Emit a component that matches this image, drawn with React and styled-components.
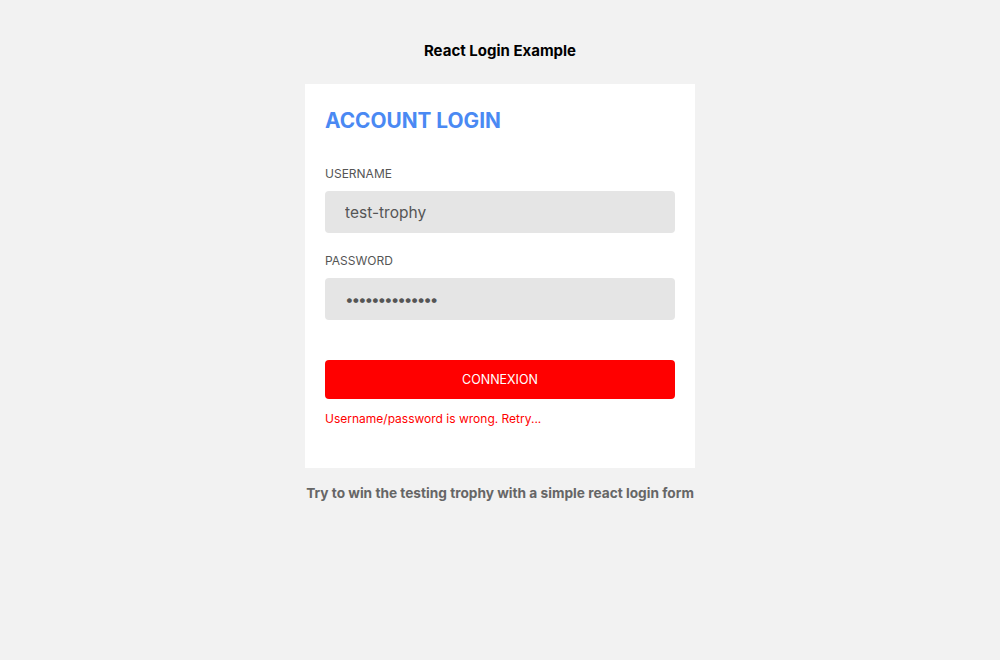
import React from 'react';
import styled, { createGlobalStyle } from 'styled-components';

const GlobalStyle = createGlobalStyle`
  html, body {
    margin: 0;
    padding: 0;
    background: #f2f2f2;
    font-family: Inter, "Liberation Sans", sans-serif;
  }
  * { box-sizing: border-box; }
`;

const Page = styled.main`
  min-height: 660px;
  display: flex;
  flex-direction: column;
  align-items: center;
  padding-top: 41px;
`;

const Title = styled.h1`
  margin: 0;
  font-size: 15px;
  font-weight: 700;
  line-height: 20px;
  color: #000;
`;

const Card = styled.form`
  margin-top: 23px;
  width: 390px;
  background: #fff;
  padding: 24px 20px 41px;
  display: flex;
  flex-direction: column;
`;

const Heading = styled.h2`
  margin: 0 0 32px;
  font-size: 20.8px;
  line-height: 26px;
  font-weight: 700;
  color: #4a89f3;
`;

const Label = styled.label`
  font-size: 12px;
  line-height: 16px;
  color: #555;
  margin-bottom: 9px;
`;

const Input = styled.input`
  width: 100%;
  height: 42px;
  border: none;
  border-radius: 4px;
  background: #e5e5e5;
  padding: 0 20px;
  font-family: inherit;
  font-size: 15.5px;
  color: #555;
  letter-spacing: ${p => p.type === 'password' ? '-2.2px' : '0'};
  margin-bottom: ${p => p.$last ? '40px' : '20px'};
  outline: none;
`;

const Button = styled.button`
  width: 100%;
  height: 39px;
  border: none;
  border-radius: 4px;
  background: #ff0000;
  color: #fff;
  font-family: inherit;
  font-size: 12.5px;
  cursor: pointer;
`;

const Error = styled.p`
  margin: 12px 0 0;
  font-size: 12px;
  line-height: 16px;
  color: #ff0000;
`;

const Footer = styled.p`
  margin: 17px 0 0;
  font-size: 13.7px;
  font-weight: 700;
  color: #666;
`;

export default function App() {
  return (
    <>
      <GlobalStyle />
      <Page>
        <Title>React Login Example</Title>
        <Card onSubmit={e => e.preventDefault()}>
          <Heading>ACCOUNT LOGIN</Heading>
          <Label htmlFor="username">USERNAME</Label>
          <Input id="username" defaultValue="test-trophy" />
          <Label htmlFor="password">PASSWORD</Label>
          <Input id="password" type="password" defaultValue="12345678901234" $last />
          <Button type="submit">CONNEXION</Button>
          <Error>Username/password is wrong. Retry...</Error>
        </Card>
        <Footer>Try to win the testing trophy with a simple react login form</Footer>
      </Page>
    </>
  );
}
